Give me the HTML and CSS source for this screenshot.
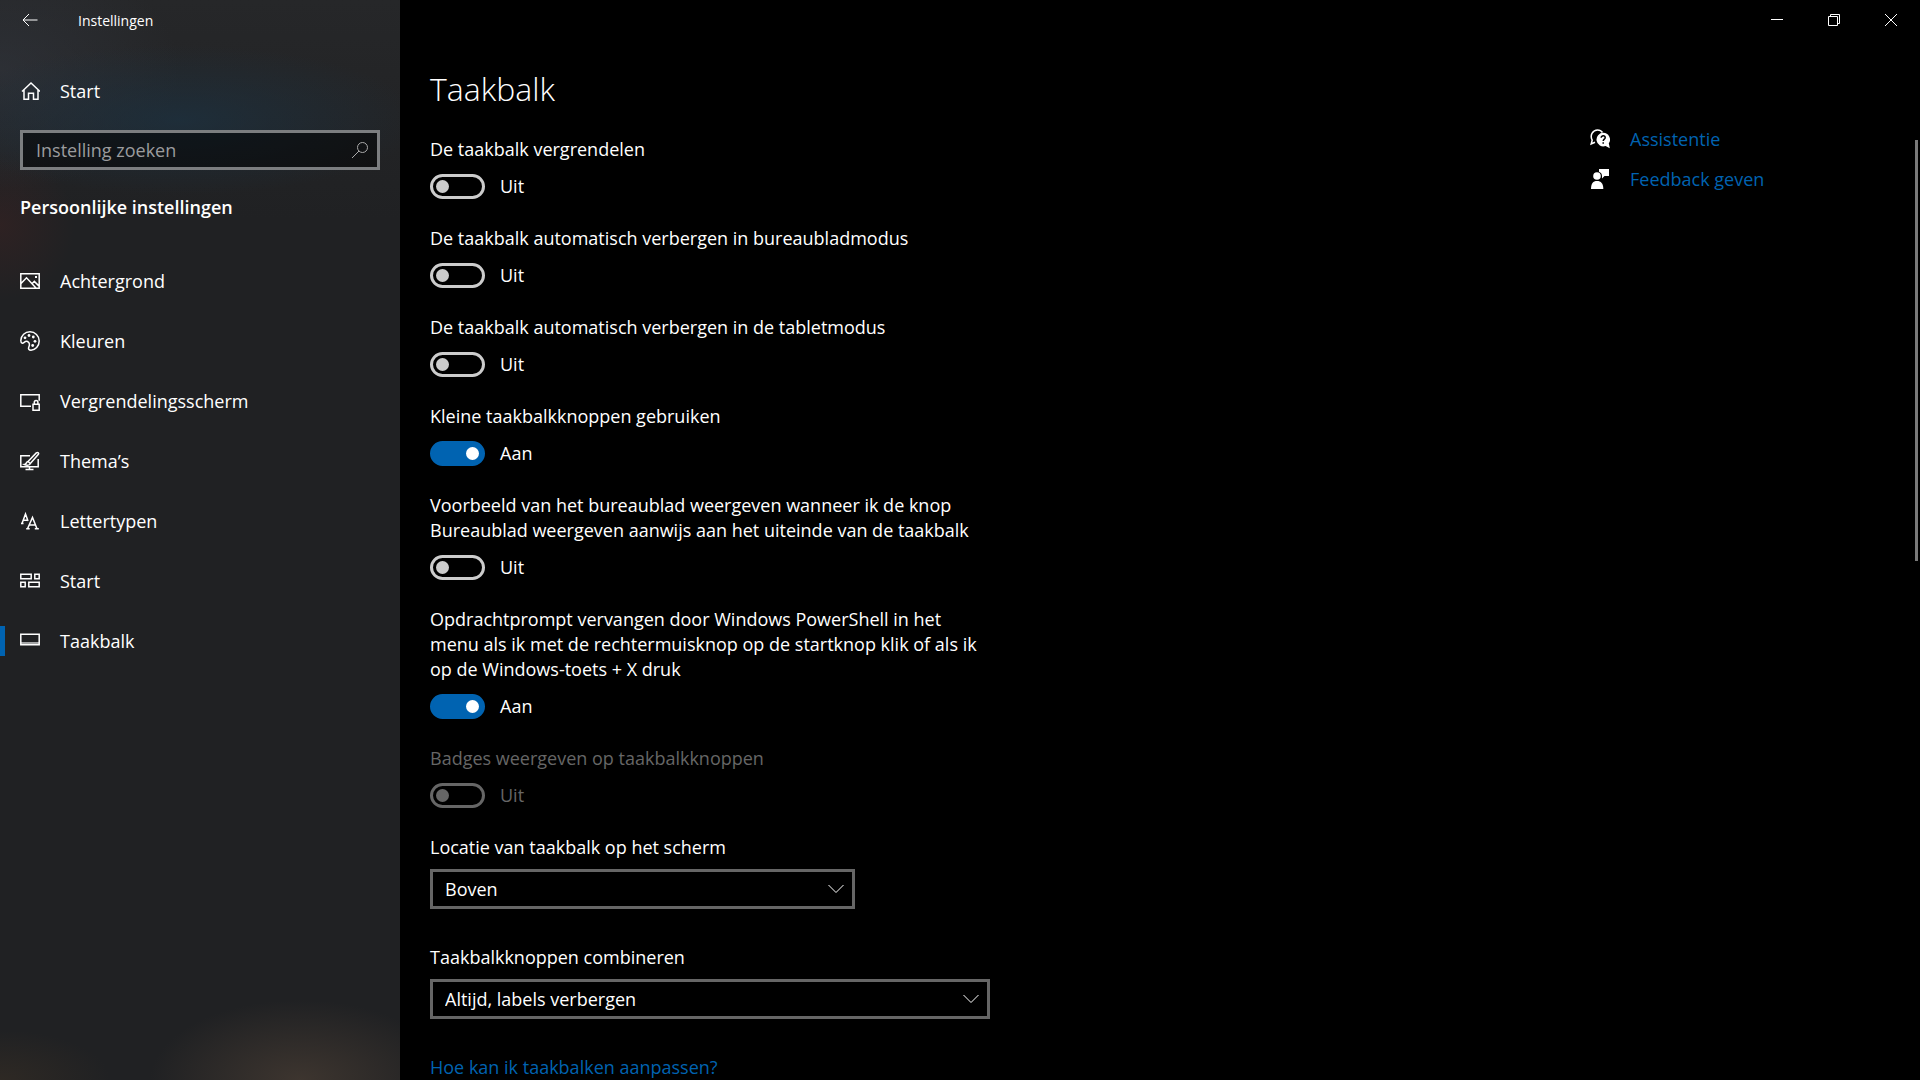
FILE: index.html
```html
<!DOCTYPE html>
<html lang="nl">
<head>
    <meta charset="UTF-8">
    <meta name="viewport" content="width=device-width, initial-scale=1">
    <title>Instellingen</title>
    <link rel="stylesheet" href="styles.css">
</head>
<body>
    <div class="sidebar">
        <header class="sidebar-title">
            <button class="back" type="button" aria-label="Terug">
                <svg width="16" height="14" viewBox="0 0 16 14"><path d="M15.500 7H1M7 1L1 7l6 6"/></svg>
            </button>
            <span>Instellingen</span>
        </header>
        <a class="nav-item home" href="#">
            <svg width="20" height="20" viewBox="0 0 20 20"><path d="M2 10.500L11 2l9 8.500M4 9v9.200h4.500v-6h5v6H18V9"/></svg>
            Start
        </a>
        <form class="search">
            <input type="search" placeholder="Instelling zoeken" aria-label="Instelling zoeken">
            <svg width="18" height="18" viewBox="0 0 18 18"><circle cx="11.500" cy="6.500" r="5"/><path d="M8 10l-7 7"/></svg>
        </form>
        <h2>Persoonlijke instellingen</h2>
        <nav>
            <a class="nav-item" href="#">
                <svg width="20" height="20" viewBox="0 0 20 20"><path d="M.8 2.800h18.400v14.400H.8zM1 12.500l5.500-5.700L16 17M12 12.700l2.300-2.300 5 5"/><path class="fill" d="M15 5h2v2h-2z"/></svg>
                Achtergrond
            </a>
            <a class="nav-item" href="#">
                <svg width="20" height="20" viewBox="0 0 20 20"><path d="M.8 9.500C1 4.500 5 .8 10 .8s9.200 4 9.200 9.200-4 9.200-8.200 9.200c-2.200 0-3-1.500-2.200-3 1-2.200 1-4.700-1.300-5.700C4.800 9.500 4 12.500 2.300 12.200.9 11.900.8 10.600.8 9.500z"/><g class="fill"><circle cx="5" cy="6.800" r="1.400"/><circle cx="9" cy="4.500" r="1.400"/><circle cx="13.300" cy="6" r="1.400"/><circle cx="15" cy="10.300" r="1.400"/><circle cx="12.700" cy="14.500" r="1.400"/></g></svg>
                Kleuren
            </a>
            <a class="nav-item" href="#">
                <svg width="20" height="20" viewBox="0 0 20 20"><path d="M11 15.300H.8V3.800h18.400v6M13 13.200h6.200v6H13zM14.300 13v-1.700a1.800 1.800 0 0 1 3.600 0V13"/></svg>
                Vergrendelingsscherm
            </a>
            <a class="nav-item" href="#">
                <svg width="20" height="20" viewBox="0 0 20 20"><path d="M10 4.800H.8v11h17.400V8M9.500 16v2.500M5.500 18.500h8M8 10.500l8.300-8.600c1.600-1.200 3 .2 1.900 1.700L10.300 12.500M8 10.500c-2 .2-1.200 2.700-3.500 3 2.500 1.200 5.500.8 5.800-1z"/></svg>
                Thema’s
            </a>
            <a class="nav-item" href="#">
                <svg width="20" height="20" viewBox="0 0 20 20"><path d="M2 12.500L5.500 3l2.500 7M3.300 9.300H7M1 12.500h2.500M7.500 17.700L12.500 6.500l4.500 11.200M9.200 14h6.200M6.200 17.700h3.500M14.800 17.700h4"/></svg>
                Lettertypen
            </a>
            <a class="nav-item" href="#">
                <svg width="20" height="20" viewBox="0 0 20 20"><path d="M.8 3.300h10.400v4.400H.8zM14.800 3.300h4.400v4.400h-4.400zM.8 11.300h4.400v4.400H.8zM8.800 11.300h10.400v4.400H8.800z"/></svg>
                Start
            </a>
            <a class="nav-item active" href="#" aria-current="page">
                <svg width="20" height="20" viewBox="0 0 20 20"><path d="M.8 3.300h18.400v10.400H.8z"/><path class="fill dim" d="M1 11h18v3H1z"/></svg>
                Taakbalk
            </a>
        </nav>
    </div>

    <div class="content">
        <div class="window-controls">
            <button type="button" aria-label="Minimaliseren"><svg width="12" height="12" viewBox="0 0 12 12"><path d="M0 5.500h12"/></svg></button>
            <button type="button" aria-label="Verkleinen"><svg width="12" height="12" viewBox="0 0 12 12"><path d="M.5 2.500h9v9h-9zM2.500 2.500v-2h9v9h-2"/></svg></button>
            <button type="button" aria-label="Sluiten"><svg width="12" height="12" viewBox="0 0 12 12"><path d="M0 0l12 12M12 0L0 12"/></svg></button>
        </div>
        <div class="columns">
            <main>
                <h1>Taakbalk</h1>

                <div class="setting">
                    <label for="lock">De taakbalk vergrendelen</label>
                    <div class="toggle"><input type="checkbox" id="lock"><span>Uit</span></div>
                </div>
                <div class="setting">
                    <label for="hideDesktop">De taakbalk automatisch verbergen in bureaubladmodus</label>
                    <div class="toggle"><input type="checkbox" id="hideDesktop"><span>Uit</span></div>
                </div>
                <div class="setting">
                    <label for="hideTablet">De taakbalk automatisch verbergen in de tabletmodus</label>
                    <div class="toggle"><input type="checkbox" id="hideTablet"><span>Uit</span></div>
                </div>
                <div class="setting">
                    <label for="smallButtons">Kleine taakbalkknoppen gebruiken</label>
                    <div class="toggle"><input type="checkbox" id="smallButtons" checked><span>Aan</span></div>
                </div>
                <div class="setting">
                    <label for="peek">Voorbeeld van het bureaublad weergeven wanneer ik de knop Bureaublad weergeven aanwijs aan het uiteinde van de taakbalk</label>
                    <div class="toggle"><input type="checkbox" id="peek"><span>Uit</span></div>
                </div>
                <div class="setting">
                    <label for="powershell">Opdrachtprompt vervangen door Windows PowerShell in het menu als ik met de rechtermuisknop op de startknop klik of als ik op de Windows-toets + X druk</label>
                    <div class="toggle"><input type="checkbox" id="powershell" checked><span>Aan</span></div>
                </div>
                <div class="setting disabled">
                    <label for="badges">Badges weergeven op taakbalkknoppen</label>
                    <div class="toggle"><input type="checkbox" id="badges" disabled><span>Uit</span></div>
                </div>

                <div class="field">
                    <label for="location">Locatie van taakbalk op het scherm</label>
                    <div class="select narrow">
                        <select id="location">
                            <option>Links</option>
                            <option selected>Boven</option>
                            <option>Rechts</option>
                            <option>Onder</option>
                        </select>
                        <svg width="16" height="10" viewBox="0 0 16 10"><path d="M.5 1L8 8.500 15.500 1"/></svg>
                    </div>
                </div>
                <div class="field">
                    <label for="combine">Taakbalkknoppen combineren</label>
                    <div class="select">
                        <select id="combine">
                            <option selected>Altijd, labels verbergen</option>
                            <option>Als de taakbalk vol is</option>
                            <option>Nooit</option>
                        </select>
                        <svg width="16" height="10" viewBox="0 0 16 10"><path d="M.5 1L8 8.500 15.500 1"/></svg>
                    </div>
                </div>

                <a href="#">Hoe kan ik taakbalken aanpassen?</a>
            </main>
            <aside>
                <a class="help" href="#">
                    <svg width="20" height="20" viewBox="0 0 20 20">
                        <path class="line" d="M5 13.200L1.200 15l1-3.800C-.5 6 3 .9 7.500.9c2.300 0 4 1 5 2.600"/>
                        <path d="M13.300 3.800a6.700 6.700 0 0 1 5.500 10.500l1 5-4.200-2.300A6.800 6.800 0 1 1 13.300 3.800z"/>
                        <path class="mark" d="M11.200 8.700c0-2.500 4-2.400 4 0 0 1.500-2 1.500-2 3.300M13.200 13.200v1.500"/>
                    </svg>
                    Assistentie
                </a>
                <a class="help" href="#">
                    <svg width="20" height="20" viewBox="0 0 20 20">
                        <path d="M9 0h10v7h-4.500L12 9.500V7c0-2-1.200-3.700-3-4.300z"/>
                        <circle cx="7" cy="7" r="3.800"/>
                        <path d="M1 20c0-5.500 2-8 6-8s6.300 2.500 6.300 8z"/>
                    </svg>
                    Feedback geven
                </a>
            </aside>
        </div>
        <div class="scrollbar"></div>
    </div>
</body>
</html>
```
FILE: styles.css
```css
* {
    box-sizing: border-box;
}
body {
    margin: 0;
    height: 100vh;
    display: flex;
    overflow: hidden;
    background-color: #000;
    color: #fff;
    font-family: "Open Sans", "Noto Sans", sans-serif;
    font-size: 18px;
    line-height: 25px;
}
a {
    color: #0063b1;
    text-decoration: none;
}
button {
    background: none;
    border: none;
    padding: 0;
    color: #fff;
    display: flex;
    align-items: center;
    justify-content: center;
}
svg {
    fill: none;
    stroke: currentColor;
    flex: none;
}

/* sidebar */
.sidebar {
    width: 400px;
    flex: none;
    background:
        radial-gradient(ellipse 240px 75px at 180px 120px, rgba(28, 50, 66, 0.7), transparent),
        radial-gradient(ellipse 180px 120px at 0 70px, rgba(50, 54, 62, 0.6), transparent),
        radial-gradient(ellipse 75px 75px at 0 225px, rgba(60, 34, 34, 0.5), transparent),
        radial-gradient(ellipse 150px 80px at 300px 100%, #3d352f, transparent),
        radial-gradient(ellipse 110px 50px at 0 100%, #2e2924, transparent),
        linear-gradient(#262729, #202123 220px);
}
.sidebar-title {
    display: flex;
    align-items: center;
    height: 40px;
    font-size: 14px;
}
.back {
    width: 60px;
    height: 40px;
    margin-right: 18px;
}
.nav-item {
    display: flex;
    align-items: center;
    gap: 20px;
    height: 60px;
    padding: 0 20px;
    color: #fff;
}
.nav-item svg {
    stroke-width: 1.5;
}
.home {
    margin-bottom: 9px;
    margin-top: 21px;
}
.nav-item .fill {
    fill: currentColor;
    stroke: none;
}
.nav-item .dim {
    opacity: 0.6;
}
.active {
    background: linear-gradient(#0063b1, #0063b1) left center / 5px 30px no-repeat;
}
.search {
    display: flex;
    align-items: center;
    height: 40px;
    margin: 0 20px;
    padding: 0 8px 0 13px;
    border: 3px solid #7c7e80;
    background-color: rgba(0, 0, 0, 0.5);
    color: #aaa;
}
.search input {
    flex: 1;
    min-width: 0;
    padding: 0;
    border: none;
    outline: none;
    background: none;
    color: #fff;
    font: inherit;
}
.search input::placeholder {
    color: #9b9c9e;
}
h2 {
    margin: 25px 20px 31px;
    font-size: 18px;
    font-weight: 600;
    line-height: 25px;
}

/* content */
.content {
    flex: 1;
    position: relative;
}
.window-controls {
    display: flex;
    justify-content: flex-end;
    padding-right: 1px;
}
.window-controls button {
    width: 57px;
    height: 40px;
}
.columns {
    display: grid;
    grid-template-columns: 1fr 330px;
    padding-left: 30px;
}
h1 {
    margin: 24px 0 23px;
    font-size: 32px;
    font-weight: 300;
    line-height: 50px;
}
.setting {
    max-width: 560px;
    margin-bottom: 27px;
}
.setting label,
.field label {
    display: block;
}
.toggle {
    display: flex;
    align-items: center;
    gap: 15px;
    margin-top: 12px;
}
.toggle input {
    appearance: none;
    display: flex;
    align-items: center;
    width: 55px;
    height: 25px;
    margin: 0;
    padding: 0 3px;
    border: 3px solid #ccc;
    border-radius: 13px;
}
.toggle input::before {
    content: "";
    width: 13px;
    height: 13px;
    border-radius: 50%;
    background-color: #ccc;
}
.toggle input:checked {
    justify-content: flex-end;
    border-color: #0063b1;
    background-color: #0063b1;
}
.toggle input:checked::before {
    background-color: #fff;
}
.disabled {
    color: #666;
}
.disabled input {
    border-color: #666;
}
.disabled input::before {
    background-color: #666;
}
.field {
    margin-bottom: 36px;
}
.select {
    display: grid;
    align-items: center;
    width: 560px;
    margin-top: 9px;
}
.select.narrow {
    width: 425px;
}
.select select,
.select svg {
    grid-area: 1 / 1;
}
.select svg {
    justify-self: end;
    margin-right: 11px;
    pointer-events: none;
}
.select select {
    appearance: none;
    height: 40px;
    padding: 0 12px;
    border: 3px solid #666;
    border-radius: 0;
    background-color: #000;
    color: #fff;
    font: inherit;
}
aside {
    padding-top: 79px;
}
.help {
    display: flex;
    align-items: center;
    gap: 20px;
    height: 40px;
}
.help svg {
    fill: #fff;
    stroke: none;
}
.help .line {
    fill: none;
    stroke: #fff;
    stroke-width: 1.5;
}
.help .mark {
    fill: none;
    stroke: #000;
    stroke-width: 1.5;
}
.scrollbar {
    position: absolute;
    top: 140px;
    right: 2px;
    width: 3px;
    height: 39vh;
    background-color: #7a7a7a;
}
```
